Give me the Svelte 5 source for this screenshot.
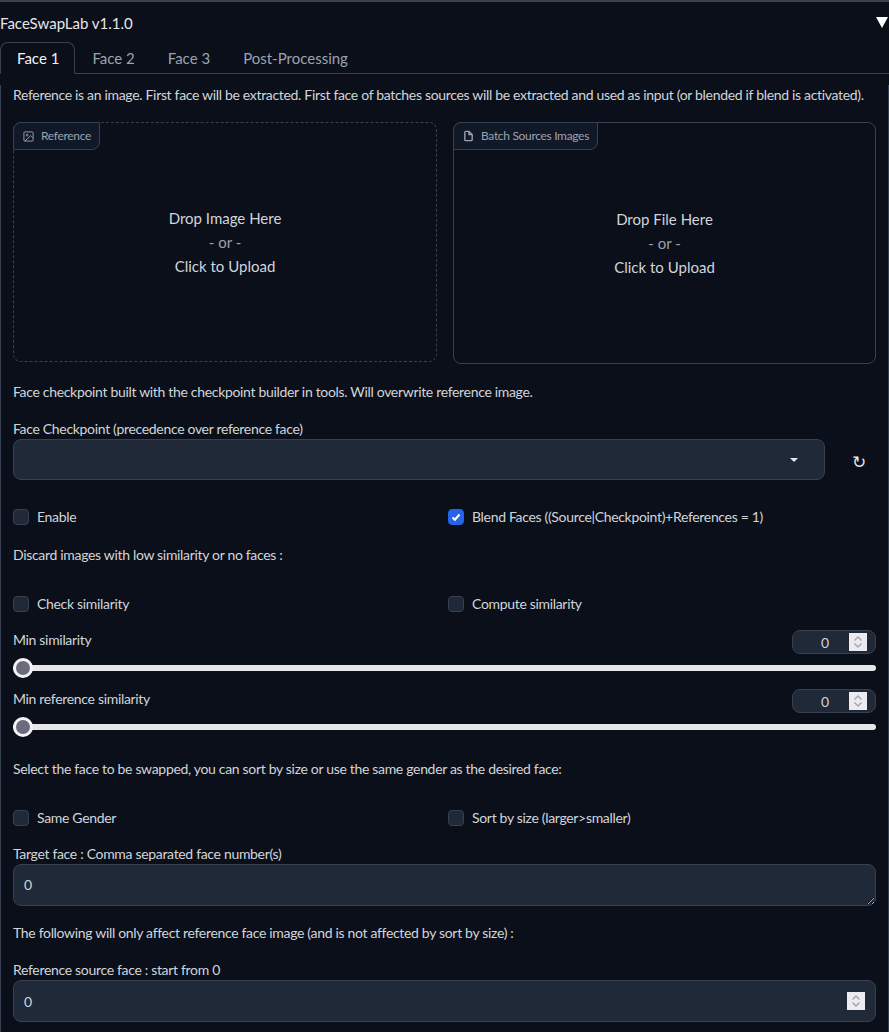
<script>
	const tabs = ['Face 1', 'Face 2', 'Face 3', 'Post-Processing'];
	let active = $state('Face 1');
	let enable = $state(false);
	let blend = $state(true);
	let minSim = $state(0);
	let minRefSim = $state(0);
</script>

{#snippet spinner()}
	<span class="spinner">
		<svg width="10" height="14" viewBox="0 0 10 14" fill="none" stroke="#a3a3ad" stroke-width="1.4"><path d="M1.5 5.5L5 2l3.5 3.5" /><path d="M1.5 8.5L5 12l3.5-3.5" /></svg>
	</span>
{/snippet}

<div class="app">
	<header>
		<span>FaceSwapLab v1.1.0</span>
		<span class="arrow"></span>
	</header>

	<nav>
		{#each tabs as tab}
			<button class:selected={active === tab} onclick={() => (active = tab)}>{tab}</button>
		{/each}
	</nav>

	<main>
		<p class="note first">Reference is an image. First face will be extracted. First face of batches sources will be extracted and used as input (or blended if blend is activated).</p>

		<div class="two uploads">
			<div class="upload dashed">
				<span class="tag">
					<svg width="11" height="11" viewBox="0 0 24 24" fill="none" stroke="currentColor" stroke-width="2"><rect x="2" y="2" width="20" height="20" rx="2" /><circle cx="9" cy="9" r="2" /><path d="M22 15l-5-5L4 22" /></svg>
					Reference
				</span>
				<div class="drop">
					<span>Drop Image Here</span>
					<span class="or">- or -</span>
					<span>Click to Upload</span>
				</div>
			</div>
			<div class="upload solid">
				<span class="tag">
					<svg width="11" height="12" viewBox="0 0 24 24" fill="none" stroke="currentColor" stroke-width="3"><path d="M13 2H6a2 2 0 0 0-2 2v16a2 2 0 0 0 2 2h12a2 2 0 0 0 2-2V9z" /><path d="M13 2v7h7" /></svg>
					Batch Sources Images
				</span>
				<div class="drop">
					<span>Drop File Here</span>
					<span class="or">- or -</span>
					<span>Click to Upload</span>
				</div>
			</div>
		</div>

		<p class="note checkpoint">Face checkpoint built with the checkpoint builder in tools. Will overwrite reference image.</p>

		<label class="label ckpt-label" for="ckpt">Face Checkpoint (precedence over reference face)</label>
		<div class="dropdown-row">
			<div class="dropdown"><input id="ckpt" class="field" /><span class="caret"></span></div>
			<button class="refresh">↻</button>
		</div>

		<div class="two checks enable-row">
			<label class="check"><input type="checkbox" bind:checked={enable} />Enable</label>
			<label class="check"><input type="checkbox" bind:checked={blend} />Blend Faces ((Source|Checkpoint)+References = 1)</label>
		</div>

		<p class="note discard">Discard images with low similarity or no faces :</p>

		<div class="two checks sim-row">
			<label class="check"><input type="checkbox" />Check similarity</label>
			<label class="check"><input type="checkbox" />Compute similarity</label>
		</div>

		<div class="slider first-slider">
			<div class="slider-head">
				<span>Min similarity</span>
				<div class="num-wrap">
					<input type="number" class="num" bind:value={minSim} min="0" max="1" step="0.01" />
					{@render spinner()}
				</div>
			</div>
			<input type="range" class="range" bind:value={minSim} min="0" max="1" step="0.01" />
		</div>
		<div class="slider second-slider">
			<div class="slider-head">
				<span>Min reference similarity</span>
				<div class="num-wrap">
					<input type="number" class="num" bind:value={minRefSim} min="0" max="1" step="0.01" />
					{@render spinner()}
				</div>
			</div>
			<input type="range" class="range" bind:value={minRefSim} min="0" max="1" step="0.01" />
		</div>

		<p class="note select-note">Select the face to be swapped, you can sort by size or use the same gender as the desired face:</p>

		<div class="two checks gender-row">
			<label class="check"><input type="checkbox" />Same Gender</label>
			<label class="check"><input type="checkbox" />Sort by size (larger&gt;smaller)</label>
		</div>

		<label class="label target" for="target">Target face : Comma separated face number(s)</label>
		<textarea id="target" class="field area" rows="1">0</textarea>

		<p class="note following">The following will only affect reference face image (and is not affected by sort by size) :</p>

		<label class="label source" for="source">Reference source face : start from 0</label>
		<div class="num-wrap">
			<input id="source" type="number" class="field spin" value="0" />
			{@render spinner()}
		</div>
	</main>
</div>

<style>
	:global(body) {
		margin: 0;
		background: #0b0f19;
		color: #d1d5db;
		font-family: Lato, 'Noto Sans', sans-serif;
		font-size: 14px;
		letter-spacing: -0.32px;
	}
	.app {
		height: 100vh;
		overflow: hidden;
		border-top: 2px solid #374151;
		box-sizing: border-box;
		line-height: 20px;
	}
	header {
		display: flex;
		justify-content: space-between;
		align-items: center;
		height: 40px;
		padding-top: 1px;
		box-sizing: border-box;
		font-size: 15px;
		letter-spacing: 0;
		color: #e5e7eb;
	}
	.arrow {
		width: 0;
		height: 0;
		margin-right: 1px;
		border-left: 6px solid transparent;
		border-right: 6px solid transparent;
		border-top: 11px solid #fff;
	}
	nav {
		display: flex;
		height: 32px;
		box-sizing: border-box;
		border-bottom: 1px solid #374151;
	}
	nav button {
		padding: 0 15px 0 16px;
		height: 32px;
		background: none;
		border: 1px solid transparent;
		border-radius: 8px 8px 0 0;
		color: #9ca3af;
		font: inherit;
		font-size: 15px;
		letter-spacing: 0;
	}
	nav button.selected {
		color: #f3f4f6;
		border-color: #374151;
		border-bottom-color: #0b0f19;
	}
	main {
		padding: 0 12px;
		border-left: 1px solid #374151;
		border-right: 1px solid #374151;
		height: 960px;
	}
	p {
		margin: 0;
	}
	.two {
		display: grid;
		grid-template-columns: 424px 423px;
		gap: 16px;
	}
	.first { margin-top: 11px; }
	.uploads { margin-top: 17px; }
	.upload {
		position: relative;
		box-sizing: border-box;
		display: flex;
		align-items: center;
		justify-content: center;
		border: 1px dashed #374151;
		border-radius: 8px;
		height: 240px;
	}
	.upload.solid {
		border-style: solid;
		height: 242px;
	}
	.tag {
		position: absolute;
		top: -1px;
		left: -1px;
		display: flex;
		align-items: center;
		gap: 7px;
		height: 26px;
		padding: 0 8px 0 9px;
		border: 1px solid #374151;
		border-radius: 8px 0 8px 0;
		background: #111827;
		color: #9ca3af;
		font-size: 12px;
	}
	.drop {
		display: flex;
		flex-direction: column;
		align-items: center;
		line-height: 24px;
		font-size: 15px;
		letter-spacing: 0;
		color: #d1d5db;
	}
	.or { color: #9ca3af; }
	.checkpoint { margin-top: 18px; }
	.label {
		display: block;
		color: #d1d5db;
	}
	.ckpt-label { margin-top: 17px; }
	.field {
		box-sizing: border-box;
		display: block;
		width: 100%;
		height: 42px;
		padding: 0 10px;
		background: #1f2937;
		border: 1px solid #374151;
		border-radius: 8px;
		color: #d1d5db;
		font: inherit;
		outline: none;
	}
	.dropdown-row {
		display: flex;
		height: 41px;
	}
	.dropdown {
		position: relative;
		width: 812px;
	}
	.dropdown .field {
		height: 41px;
	}
	.caret {
		position: absolute;
		right: 27px;
		top: 19px;
		border-left: 4px solid transparent;
		border-right: 4px solid transparent;
		border-top: 4px solid #e5e7eb;
	}
	.refresh {
		flex: 1;
		padding: 4px 0 0 16px;
		background: none;
		border: none;
		color: #e5e7eb;
		font: inherit;
		font-size: 17px;
	}
	.check {
		display: flex;
		align-items: center;
		gap: 8px;
	}
	.check input {
		appearance: none;
		box-sizing: border-box;
		width: 16px;
		height: 16px;
		margin: 0;
		border: 1px solid #374151;
		border-radius: 4px;
		background: #1f2937;
	}
	.check input:checked {
		border-color: #2563eb;
		background: #2563eb url("data:image/svg+xml,%3Csvg viewBox='0 0 16 16' xmlns='http://www.w3.org/2000/svg'%3E%3Cpath fill='none' stroke='white' stroke-width='2.4' d='M4 8.5l2.8 2.6L12 5.2'/%3E%3C/svg%3E") center / 100% no-repeat;
	}
	.checks label:nth-child(2) { margin-left: -5px; }
	.enable-row { margin-top: 27px; }
	.discard { margin-top: 18px; }
	.sim-row { margin-top: 29px; }
	.slider-head {
		display: flex;
		justify-content: space-between;
		height: 24px;
	}
	.first-slider { margin-top: 16px; }
	.second-slider { margin-top: 11px; }
	.num-wrap {
		position: relative;
	}
	.num {
		box-sizing: border-box;
		display: block;
		width: 84px;
		height: 24px;
		padding: 0 28px 0 10px;
		background: #1f2937;
		border: 1px solid #374151;
		border-radius: 8px;
		color: #d1d5db;
		font: inherit;
		text-align: center;
		outline: none;
	}
	input[type='number'] {
		appearance: textfield;
	}
	input[type='number']::-webkit-inner-spin-button {
		display: none;
	}
	.spinner {
		position: absolute;
		top: 3px;
		right: 9px;
		width: 18px;
		height: 18px;
		display: flex;
		align-items: center;
		justify-content: center;
		background: #ebebf0;
	}
	.spin + .spinner {
		top: 12px;
		right: 11px;
	}
	.range {
		appearance: none;
		display: block;
		width: 100%;
		height: 20px;
		margin: 4px 0 0;
		background: none;
	}
	.range::-webkit-slider-runnable-track {
		height: 6px;
		border-radius: 3px;
		background: #e5e7eb;
	}
	.range::-webkit-slider-thumb {
		appearance: none;
		box-sizing: border-box;
		width: 20px;
		height: 20px;
		margin-top: -7px;
		border: 3px solid #f3f4f6;
		border-radius: 50%;
		background: #6b6b7b;
	}
	.select-note { margin-top: 22px; }
	.gender-row { margin-top: 29px; }
	.target { margin-top: 16px; }
	.area {
		padding: 10px;
		resize: vertical;
	}
	.following { margin-top: 17px; }
	.source { margin-top: 17px; }
</style>
